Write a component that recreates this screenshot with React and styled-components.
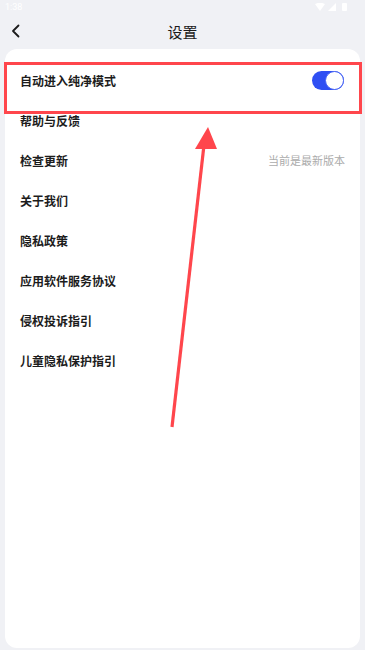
import styled, { createGlobalStyle } from "styled-components"

const GlobalStyle = createGlobalStyle`
    html, body {
        margin: 0;
        padding: 0;
        background: #F0F1F5;
    }
    * {
        box-sizing: border-box;
    }
`

const rows = [
    { title: "自动进入纯净模式", toggle: true },
    { title: "帮助与反馈" },
    { title: "检查更新", value: "当前是最新版本" },
    { title: "关于我们" },
    { title: "隐私政策" },
    { title: "应用软件服务协议" },
    { title: "侵权投诉指引" },
    { title: "儿童隐私保护指引" },
]

export default function App() {
    return (
        <>
            <GlobalStyle />
            <Screen>
                <StatusBar>
                    <span>1:38</span>
                    <StatusIcons>
                        <svg width="10" height="8" viewBox="0 0 10 8">
                            <path d="M0 1 Q5 -1.5 10 1 L5 8 Z" fill="#fff" />
                        </svg>
                        <svg width="8" height="8" viewBox="0 0 8 8">
                            <path d="M8 0 L8 8 L0 8 Z" fill="#fff" />
                        </svg>
                        <Battery />
                    </StatusIcons>
                </StatusBar>
                <Header>
                    <BackButton>
                        <svg width="10" height="14" viewBox="0 0 10 14">
                            <path d="M7.5 1.5 L2 7 L7.5 12.5" fill="none" stroke="#1b1b1b" strokeWidth="1.8" strokeLinecap="round" strokeLinejoin="round" />
                        </svg>
                    </BackButton>
                    <Title>设置</Title>
                </Header>
                <Card>
                    {rows.map((row, i) => (
                        <Row key={row.title} first={i === 0}>
                            <RowTitle>{row.title}</RowTitle>
                            {row.value && <RowValue>{row.value}</RowValue>}
                            {row.toggle && (
                                <Switch on>
                                    <Knob />
                                </Switch>
                            )}
                        </Row>
                    ))}
                </Card>

                {/* annotation overlay */}
                <HighlightBox />
                <Arrow width="365" height="650" viewBox="0 0 365 650">
                    <line x1="172" y1="427" x2="204" y2="145" stroke="#FF464C" strokeWidth="3.2" />
                    <polygon points="208,127 195,149 217,149" fill="#FF464C" />
                </Arrow>
            </Screen>
        </>
    )
}

const Screen = styled.div`
    position: relative;
    width: 365px;
    height: 650px;
    overflow: hidden;
    background: #F0F1F5;
    font-family: "Noto Sans CJK SC", "Noto Sans", sans-serif;
    display: flex;
    flex-direction: column;
`

const StatusBar = styled.div`
    height: 16px;
    display: flex;
    align-items: center;
    justify-content: space-between;
    padding: 0 18px 2px 5px;
    span {
        font-family: "Roboto", sans-serif;
        font-size: 9px;
        color: #ffffff;
    }
`

const StatusIcons = styled.div`
    display: flex;
    align-items: center;
    gap: 3px;
`

const Battery = styled.div`
    width: 5px;
    height: 8px;
    margin-left: 3px;
    border-radius: 1px;
    background: #ffffff;
`

const Header = styled.div`
    position: relative;
    height: 32px;
    display: flex;
    align-items: center;
    justify-content: center;
    padding-bottom: 2px;
`

const BackButton = styled.div`
    position: absolute;
    left: 11px;
    top: 8px;
    display: flex;
`

const Title = styled.div`
    font-size: 15px;
    color: #1b1b1b;
`

const Card = styled.div`
    flex: 1;
    margin: 1px 5px 2px 5px;
    background: #ffffff;
    border-radius: 12px;
    padding-top: 12px;
`

const Row = styled.div`
    height: ${(p) => (p.first ? "39px" : "40px")};
    display: flex;
    align-items: center;
    justify-content: space-between;
    padding: 0 15px 0 15px;
`

const RowTitle = styled.div`
    font-size: 12px;
    font-weight: 700;
    color: #1c1c1c;
`

const RowValue = styled.div`
    font-size: 11px;
    color: #ababab;
`

const Switch = styled.div`
    width: 32px;
    height: 19px;
    border-radius: 10px;
    background: ${(p) => (p.on ? "#2F4FF3" : "#cccccc")};
    display: flex;
    align-items: center;
    justify-content: ${(p) => (p.on ? "flex-end" : "flex-start")};
    padding: 0;
    margin-right: 1px;
`

const Knob = styled.div`
    width: 19px;
    height: 19px;
    border-radius: 50%;
    background: #ffffff;
    border: 1.5px solid #4A66F5;
`

const HighlightBox = styled.div`
    position: absolute;
    left: 4px;
    top: 62px;
    width: 358px;
    height: 52px;
    border: 3px solid #FF464C;
`

const Arrow = styled.svg`
    position: absolute;
    left: 0;
    top: 0;
    pointer-events: none;
`
